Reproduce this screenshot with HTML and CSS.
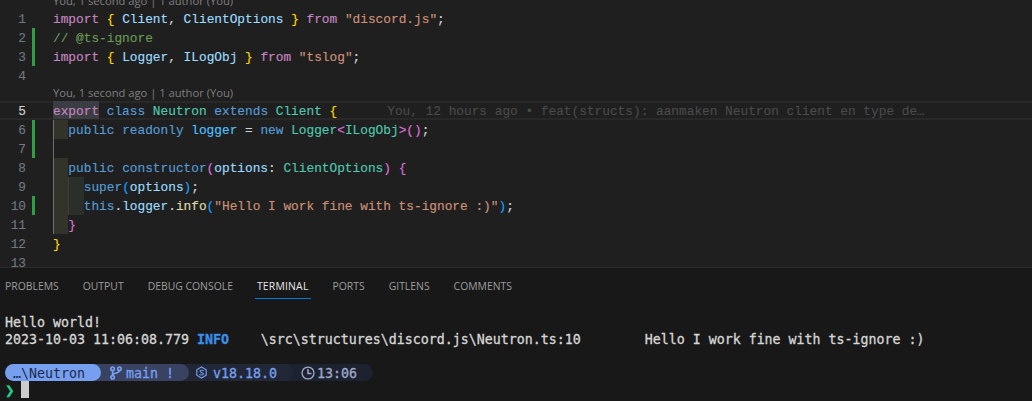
FILE: index.html
```html
<!DOCTYPE html>
<html lang="en">
<head>
<meta charset="utf-8">
<title>Neutron.ts</title>
<link rel="stylesheet" href="styles.css">
</head>
<body>
<main class="window">
  <section class="editor">
    <div class="lens first"><span>You, 1 second ago | 1 author (You)</span></div>
    <div class="row"><span class="num">1</span><span class="bar"></span><code class="code"><i class="kw">import</i> <i class="gold">{</i> <i class="var">Client</i><i class="p">,</i> <i class="var">ClientOptions</i> <i class="gold">}</i> <i class="kw">from</i> <i class="str">"discord.js"</i><i class="p">;</i></code></div>
    <div class="row"><span class="num">2</span><span class="bar on"></span><code class="code"><i class="com">// @ts-ignore</i></code></div>
    <div class="row"><span class="num">3</span><span class="bar on"></span><code class="code"><i class="kw">import</i> <i class="gold">{</i> <i class="var">Logger</i><i class="p">,</i> <i class="var">ILogObj</i> <i class="gold">}</i> <i class="kw">from</i> <i class="str">"tslog"</i><i class="p">;</i></code></div>
    <div class="row"><span class="num">4</span><span class="bar"></span><code class="code"></code></div>
    <div class="lens"><span>You, 1 second ago | 1 author (You)</span></div>
    <div class="row current"><span class="num active">5</span><span class="bar"></span><code class="code"><i class="kw sel">export</i> <i class="blue">class</i> <i class="type">Neutron</i> <i class="blue">extends</i> <i class="type">Client</i> <i class="gold">{</i><i class="blame">You, 12 hours ago • feat(structs): aanmaken Neutron client en type de…</i></code></div>
    <div class="row"><span class="num">6</span><span class="bar on"></span><code class="code"><i class="ind1"></i><i class="blue">public</i> <i class="blue">readonly</i> <i class="const">logger</i> <i class="p">=</i> <i class="blue">new</i> <i class="type">Logger</i><i class="pink">&lt;</i><i class="type">ILogObj</i><i class="pink">&gt;()</i><i class="p">;</i></code></div>
    <div class="row"><span class="num">7</span><span class="bar on"></span><code class="code guide"></code></div>
    <div class="row"><span class="num">8</span><span class="bar"></span><code class="code"><i class="ind1"></i><i class="blue">public</i> <i class="blue">constructor</i><i class="pink">(</i><i class="var">options</i><i class="p">:</i> <i class="type">ClientOptions</i><i class="pink">)</i> <i class="pink">{</i></code></div>
    <div class="row"><span class="num">9</span><span class="bar"></span><code class="code"><i class="ind1"></i><i class="ind2"></i><i class="blue">super</i><i class="sky">(</i><i class="var">options</i><i class="sky">)</i><i class="p">;</i></code></div>
    <div class="row"><span class="num">10</span><span class="bar on"></span><code class="code"><i class="ind1"></i><i class="ind2"></i><i class="blue">this</i><i class="p">.</i><i class="var">logger</i><i class="p">.</i><i class="fn">info</i><i class="sky">(</i><i class="str">"Hello I work fine with ts-ignore :)"</i><i class="sky">)</i><i class="p">;</i></code></div>
    <div class="row"><span class="num">11</span><span class="bar"></span><code class="code"><i class="ind1"></i><i class="pink">}</i></code></div>
    <div class="row"><span class="num">12</span><span class="bar"></span><code class="code"><i class="gold">}</i></code></div>
    <div class="row"><span class="num">13</span><span class="bar"></span><code class="code"></code></div>
  </section>
  <section class="panel">
    <nav class="tabs">
      <span class="tab">PROBLEMS</span>
      <span class="tab">OUTPUT</span>
      <span class="tab">DEBUG CONSOLE</span>
      <span class="tab active">TERMINAL</span>
      <span class="tab">PORTS</span>
      <span class="tab">GITLENS</span>
      <span class="tab">COMMENTS</span>
    </nav>
    <div class="terminal">
      <div class="tline">Hello world!</div>
      <div class="tline">2023-10-03 11:06:08.779 <b class="info">INFO</b>    \src\structures\discord.js\Neutron.ts:10        Hello I work fine with ts-ignore :)</div>
      <div class="tline"></div>
      <div class="tline prompt">
        <span class="seg s1">…\Neutron</span>
        <span class="seg s2"><svg class="ico" viewBox="0 0 14 16" width="12" height="14"><circle cx="3" cy="3" r="2" fill="none" stroke="currentColor" stroke-width="2"/><circle cx="11" cy="3" r="2" fill="none" stroke="currentColor" stroke-width="2"/><circle cx="3" cy="13" r="2" fill="none" stroke="currentColor" stroke-width="2"/><path d="M3 5v6M11 5c0 4-8 2-8 6" fill="none" stroke="currentColor" stroke-width="2"/></svg>main !</span>
        <span class="seg s3"><svg class="ico" viewBox="0 0 14 16" width="11" height="13"><path d="M7 1l6 3.5v7L7 15l-6-3.5v-7z" fill="none" stroke="currentColor" stroke-width="1.5"/><path d="M9.5 6C9 5 5 4.700 5 6.500S9.500 8.500 9.500 10 5 11.500 4.500 10" fill="none" stroke="currentColor" stroke-width="1.3"/></svg>v18.18.0</span>
        <span class="seg s4"><svg class="ico" viewBox="0 0 16 16" width="14" height="14"><circle cx="8" cy="8" r="6.800" fill="none" stroke="currentColor" stroke-width="1.500"/><path d="M8 3.500V8.500H12" fill="none" stroke="currentColor" stroke-width="1.700"/></svg>13:06</span>
      </div>
      <div class="tline"><b class="chev">❯</b><span class="cursor"></span></div>
    </div>
  </section>
</main>
</body>
</html>
```
FILE: styles.css
```css
* { box-sizing: border-box; }
html, body { margin: 0; height: 100%; background: #181818; }
.window { width: 1032px; height: 401px; overflow: hidden; display: flex; flex-direction: column; }
i, b { font-style: normal; font-weight: inherit; }

.editor { height: 267px; flex: none; overflow: hidden; background: #1f1f1f; font-family: "Liberation Mono", monospace; font-size: 12.8px; -webkit-text-stroke: 0.15px; }
.row { display: flex; height: 19px; line-height: 21px; white-space: pre; }
.lens { height: 16px; padding-left: 53px; line-height: 16px; font-family: "Open Sans", sans-serif; font-size: 11.2px; color: #7f7f7f; white-space: pre; -webkit-text-stroke: 0; }
.lens.first { margin-top: -7px; }
.num { width: 26px; flex: none; text-align: right; color: #6e7681; }
.num.active { color: #cccccc; }
.bar { width: 3px; flex: none; margin-left: 6px; margin-right: 18px; }
.bar.on { background: #2ea043; }
.code { display: block; flex: 1; font: inherit; min-width: 0; white-space: pre; }
.code i { white-space: pre; }
.guide { box-shadow: inset 1px 0 0 #6f6f6f; }
.code .ind1 { display: inline-block; vertical-align: top; width: 15.360px; height: 19px; background: #33332a; box-shadow: inset 1px 0 0 #6f6f6f; }
.code .ind2 { display: inline-block; vertical-align: top; width: 15.360px; height: 19px; background: #2a2f2b; box-shadow: inset 1px 0 0 #3c3c3c; }
.current { box-shadow: inset 0 2px 0 #282828, inset 0 -2px 0 #282828; }
.code .sel { display: inline-block; vertical-align: top; height: 18px; background: #3a3d41; }
.kw { color: #c586c0; }
.var { color: #9cdcfe; }
.gold { color: #ffd700; }
.pink { color: #da70d6; }
.sky { color: #179fff; }
.p { color: #d4d4d4; }
.str { color: #ce9178; }
.com { color: #6a9955; }
.blue { color: #569cd6; }
.type { color: #4ec9b0; }
.const { color: #4fc1ff; }
.fn { color: #dcdcaa; }
.code .blame { color: #4a4a4a; margin-left: 50px; }

.panel { flex: 1; background: #181818; border-top: 1px solid #2b2b2b; }
.tabs { display: flex; gap: 24px; height: 31px; padding-left: 5px; align-items: stretch; font-family: "Open Sans", sans-serif; font-size: 10.4px; }
.tab { color: #9d9d9d; line-height: 36px; height: 31px; }
.tab.active { color: #e7e7e7; border-bottom: 1px solid #0078d4; margin: 0 -2px; padding: 0 2px; letter-spacing: 0.2px; }

.terminal { padding: 14px 0 0 5px; font-family: "DejaVu Sans Mono", monospace; font-size: 13.290px; color: #d6d6d6; -webkit-text-stroke: 0.3px; }
.tline { height: 17px; line-height: 19px; white-space: pre; display: flex; }
.info { color: #3b8eea; font-weight: 700; }
.prompt { align-items: stretch; }
.seg { display: flex; align-items: center; position: relative; padding-top: 2px; border-radius: 0 9px 9px 0; }
.ico { flex: none; margin-top: -2px; -webkit-text-stroke: 0; }
.s1 { width: 96px; padding-left: 8px; background: #769ff0; color: #1e2a4a; border-radius: 9px; z-index: 4; -webkit-text-stroke: 0; }
.s2 { width: 97px; margin-left: -9px; padding-left: 13px; background: #394260; color: #769ff0; z-index: 3; }
.s2 .ico { margin-right: 4px; }
.s3 { width: 113px; margin-left: -9px; padding-left: 16px; background: #212736; color: #769ff0; z-index: 2; }
.s3 .ico { margin-right: 6px; }
.s4 { width: 89px; margin-left: -9px; padding-left: 17px; background: #1d2230; color: #a0a9cb; z-index: 1; }
.s4 .ico { margin-right: 2px; }
.s2 { padding-left: 18px; }
.chev { color: #23d18b; font-weight: 700; width: 16px; font-size: 16px; }
.cursor { width: 8px; height: 17px; background: #cccccc; }
```
